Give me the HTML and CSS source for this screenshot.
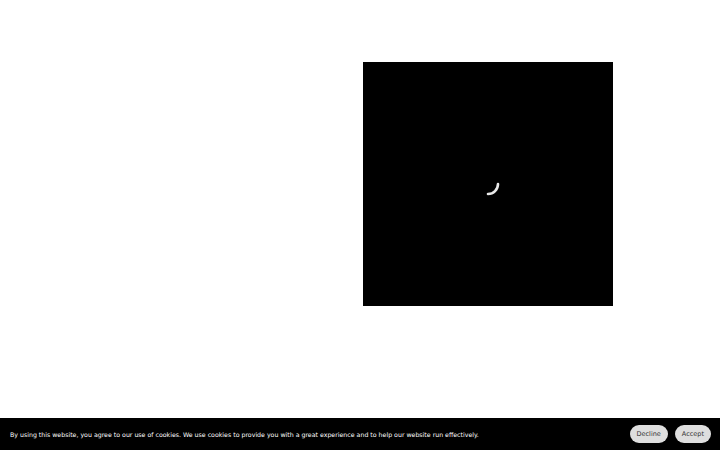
FILE: index.html
```html
<!DOCTYPE html>
<html>
<head>
<meta charset="utf-8">
<link rel="stylesheet" href="styles.css">
</head>
<body>
<main class="stage">
  <div class="player">
    <svg class="spinner" width="24" height="24" viewBox="0 0 24 24">
      <path d="M12 22 A10 10 0 0 0 22 12" fill="none" stroke="#e8e8e8" stroke-width="2.6" stroke-linecap="round"/>
    </svg>
  </div>
</main>
<div class="cookie">
  <p class="cookie-text">By using this website, you agree to our use of cookies. We use cookies to provide you with a great experience and to help our website run effectively.</p>
  <div class="cookie-actions">
    <button class="btn">Decline</button>
    <button class="btn">Accept</button>
  </div>
</div>
</body>
</html>
```
FILE: styles.css
```css
* { box-sizing: border-box; }
html, body { margin: 0; padding: 0; background: #fff; }
body { width: 720px; height: 450px; overflow: hidden; font-family: "DejaVu Sans", sans-serif; position: relative; }
.stage { padding: 62px 0 0 363px; }
.player { width: 250px; height: 244px; background: #000; display: flex; align-items: center; justify-content: center; }
.spinner { display: block; }
.cookie { position: absolute; left: 0; right: 0; bottom: 0; height: 32px; background: #000; display: flex; align-items: center; justify-content: space-between; padding: 0 9px 0 10px; }
.cookie-text { margin: 0; color: #fff; font-size: 6.25px; }
.cookie-actions { display: flex; gap: 7px; }
.btn { border: none; background: #dedede; color: #333; font-family: "DejaVu Sans", sans-serif; font-size: 6.5px; height: 18px; padding: 0 7px; border-radius: 9px; }
```
